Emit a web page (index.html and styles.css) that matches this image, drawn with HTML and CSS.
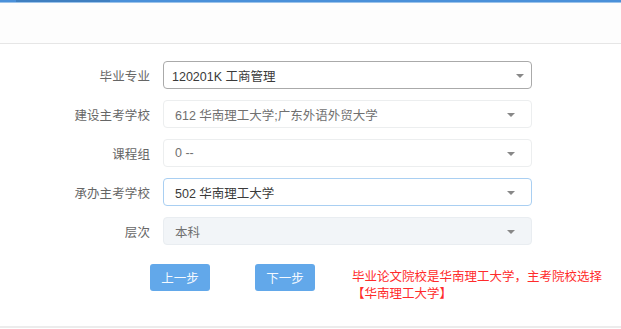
FILE: index.html
```html
<!DOCTYPE html>
<html lang="zh">
<head>
<meta charset="utf-8">
<link rel="stylesheet" href="styles.css">
</head>
<body>
<div class="topbar"><div class="topbar-active"></div></div>
<div class="header"></div>
<div class="form">
  <div class="row">
    <label class="label">毕业专业</label>
    <div class="field field-native"><span class="value dark">120201K 工商管理</span><span class="arrow"></span></div>
  </div>
  <div class="row">
    <label class="label">建设主考学校</label>
    <div class="field field-plain"><span class="value">612 华南理工大学;广东外语外贸大学</span><span class="arrow"></span></div>
  </div>
  <div class="row">
    <label class="label">课程组</label>
    <div class="field field-plain"><span class="value">0 --</span><span class="arrow"></span></div>
  </div>
  <div class="row">
    <label class="label">承办主考学校</label>
    <div class="field field-focus"><span class="value dark">502 华南理工大学</span><span class="arrow"></span></div>
  </div>
  <div class="row">
    <label class="label">层次</label>
    <div class="field field-disabled"><span class="value">本科</span><span class="arrow"></span></div>
  </div>
  <div class="actions">
    <button class="btn">上一步</button>
    <button class="btn">下一步</button>
    <p class="note">毕业论文院校是华南理工大学，主考院校选择【华南理工大学】</p>
  </div>
</div>
<div class="footer-line"></div>
</body>
</html>
```

FILE: styles.css
```css
* { box-sizing: border-box; }
html, body { margin: 0; padding: 0; background: #fff; }
body {
  font-family: "Liberation Sans", "Noto Sans CJK SC", sans-serif;
  font-size: 12.5px;
  color: #666;
  width: 621px;
  height: 329px;
  overflow: hidden;
  position: relative;
}
.topbar {
  height: 3px;
  background: #4a90d9;
  border-bottom: 1px solid #9cc3ea;
  padding-left: 16px;
}
.topbar-active {
  width: 94px;
  height: 2px;
  background: #3f7fc0;
}
.header {
  height: 41px;
  border-bottom: 1px solid #e6e6e6;
  background: #fdfdfd;
}
.form {
  padding-top: 17px;
}
.row {
  display: flex;
  align-items: center;
  height: 28px;
  margin-bottom: 11px;
}
.label {
  width: 150px;
  text-align: right;
  margin-right: 13px;
  color: #666;
  letter-spacing: 0.1px;
}
.field {
  width: 369px;
  height: 28px;
  border-radius: 4px;
  display: flex;
  align-items: center;
  position: relative;
  padding-left: 11px;
}
.value { color: #707070; }
.value.dark { color: #3a3a3a; }
.field-native {
  border: 1px solid #aaa;
  padding-left: 8px;
  background: #fff;
}
.field-plain {
  border: 1px solid #eceeef;
  background: #fff;
}
.field-focus {
  border: 1px solid #a9cff2;
  background: #fff;
}
.field-disabled {
  border: 1px solid #e9edf1;
  background: #f2f5f8;
}
.arrow {
  position: absolute;
  right: 16px;
  top: 12px;
  width: 0;
  height: 0;
  border-left: 4px solid transparent;
  border-right: 4px solid transparent;
  border-top: 4px solid #888;
}
.field-native .arrow { right: 7px; }
.actions {
  display: flex;
  align-items: flex-start;
  padding-left: 150px;
  margin-top: 19px;
}
.btn {
  width: 60px;
  height: 27px;
  border: none;
  border-radius: 3px;
  background: #62a8ea;
  color: #f4f9ff;
  font-family: inherit;
  font-size: 12.5px;
  padding: 0;
  margin-right: 45px;
}
.btn + .btn { margin-right: 37px; }
.note {
  margin: 5px 0 0;
  width: 262px;
  color: #ff2b2b;
  line-height: 17px;
}
.footer-line {
  position: absolute;
  left: 0;
  right: 0;
  bottom: 1px;
  height: 2px;
  background: #ececec;
}
```
